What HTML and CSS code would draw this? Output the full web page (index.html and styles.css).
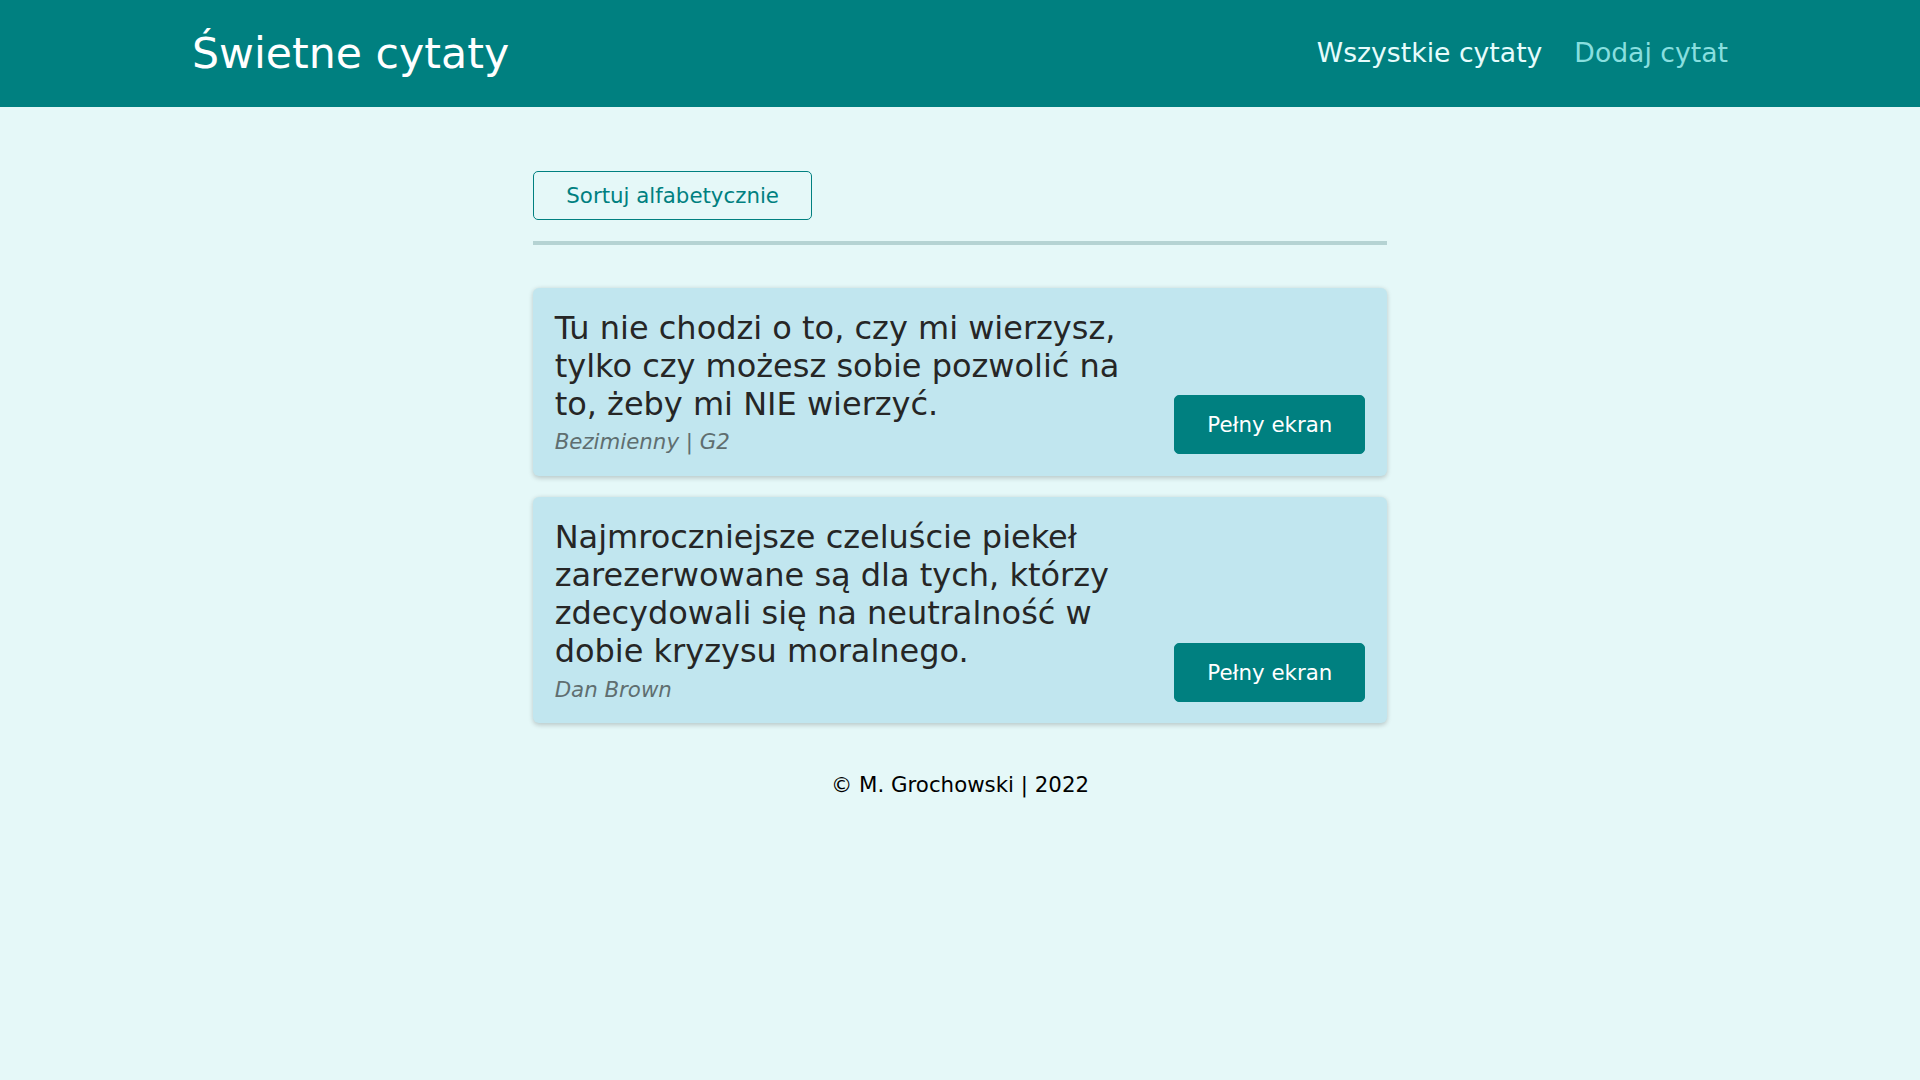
FILE: index.html
```html
<!DOCTYPE html>
<html lang="pl">
<head>
<meta charset="utf-8">
<title>Świetne cytaty</title>
<link rel="stylesheet" href="styles.css">
</head>
<body>
<header class="header">
  <div class="logo">Świetne cytaty</div>
  <nav class="nav">
    <ul class="nav-list">
      <li class="nav-item"><a class="nav-link active" href="#">Wszystkie cytaty</a></li>
      <li class="nav-item"><a class="nav-link" href="#">Dodaj cytat</a></li>
    </ul>
  </nav>
</header>
<main class="main">
  <div class="sorting">
    <button class="btn-flat">Sortuj alfabetycznie</button>
  </div>
  <ul class="list">
    <li class="item">
      <figure class="quote">
        <blockquote class="quote-text">Tu nie chodzi o to, czy mi wierzysz, tylko czy możesz sobie pozwolić na to, żeby mi NIE wierzyć.</blockquote>
        <figcaption class="quote-author">Bezimienny | G2</figcaption>
      </figure>
      <a class="btn" href="#">Pełny ekran</a>
    </li>
    <li class="item">
      <figure class="quote">
        <blockquote class="quote-text">Najmroczniejsze czeluście piekeł zarezerwowane są dla tych, którzy zdecydowali się na neutralność w dobie kryzysu moralnego.</blockquote>
        <figcaption class="quote-author">Dan Brown</figcaption>
      </figure>
      <a class="btn" href="#">Pełny ekran</a>
    </li>
  </ul>
  <footer class="footer">© M. Grochowski | 2022</footer>
</main>
</body>
</html>
```
FILE: styles.css
```css
* {
  box-sizing: border-box;
}

html {
  font-size: 21.3333px;
  font-family: "DejaVu Sans", "Noto Sans", sans-serif;
}

body {
  margin: 0;
  background-color: #e5f8f8;
}

.header {
  width: 100%;
  height: 5rem;
  display: flex;
  align-items: center;
  justify-content: space-between;
  background-color: #008080;
  padding: 0 10%;
}

.logo {
  font-size: 2rem;
  color: #ffffff;
}

.nav {
  margin-bottom: 2px;
}

.nav-list {
  list-style: none;
  margin: 0;
  padding: 0;
  display: flex;
  align-items: baseline;
}

.nav-item {
  margin-left: 1.5rem;
  font-size: 1.25rem;
}

.nav-link {
  text-decoration: none;
  color: #88dfdf;
}

.nav-link.active {
  color: #e6fcfc;
}

.main {
  margin: 3rem auto;
  width: 90%;
  max-width: 40rem;
}

.sorting {
  padding-bottom: 1rem;
  margin-bottom: 2rem;
  border-bottom: 4px solid #b5d3d3;
}

.btn-flat {
  font: inherit;
  cursor: pointer;
  padding: 11px 32px;
  border: 1px solid #008080;
  border-radius: 5px;
  background-color: transparent;
  color: #008080;
}

.list {
  list-style: none;
  margin: 0;
  padding: 0;
}

.item {
  display: flex;
  justify-content: space-between;
  align-items: flex-end;
  margin: 1rem 0;
  padding: 1rem;
  border-radius: 6px;
  background-color: #c1e6ef;
  box-shadow: 0 1.33px 5.33px rgba(0, 0, 0, 0.2);
}

.quote {
  margin: 0 10px 0 0;
  padding: 0;
}

.quote-text {
  margin: 0 0 6.5px 0;
  font-size: 1.5rem;
  line-height: 38px;
  color: #262626;
}

.quote-author {
  font-style: italic;
  color: #5f6e70;
}

.btn {
  flex-shrink: 0;
  text-decoration: none;
  cursor: pointer;
  padding: 0.75rem 1.5rem;
  border: 1px solid #008080;
  border-radius: 5px;
  background-color: #008080;
  color: #ffffff;
  white-space: nowrap;
}

.footer {
  margin-top: 49px;
  text-align: center;
  color: #000000;
}
```
